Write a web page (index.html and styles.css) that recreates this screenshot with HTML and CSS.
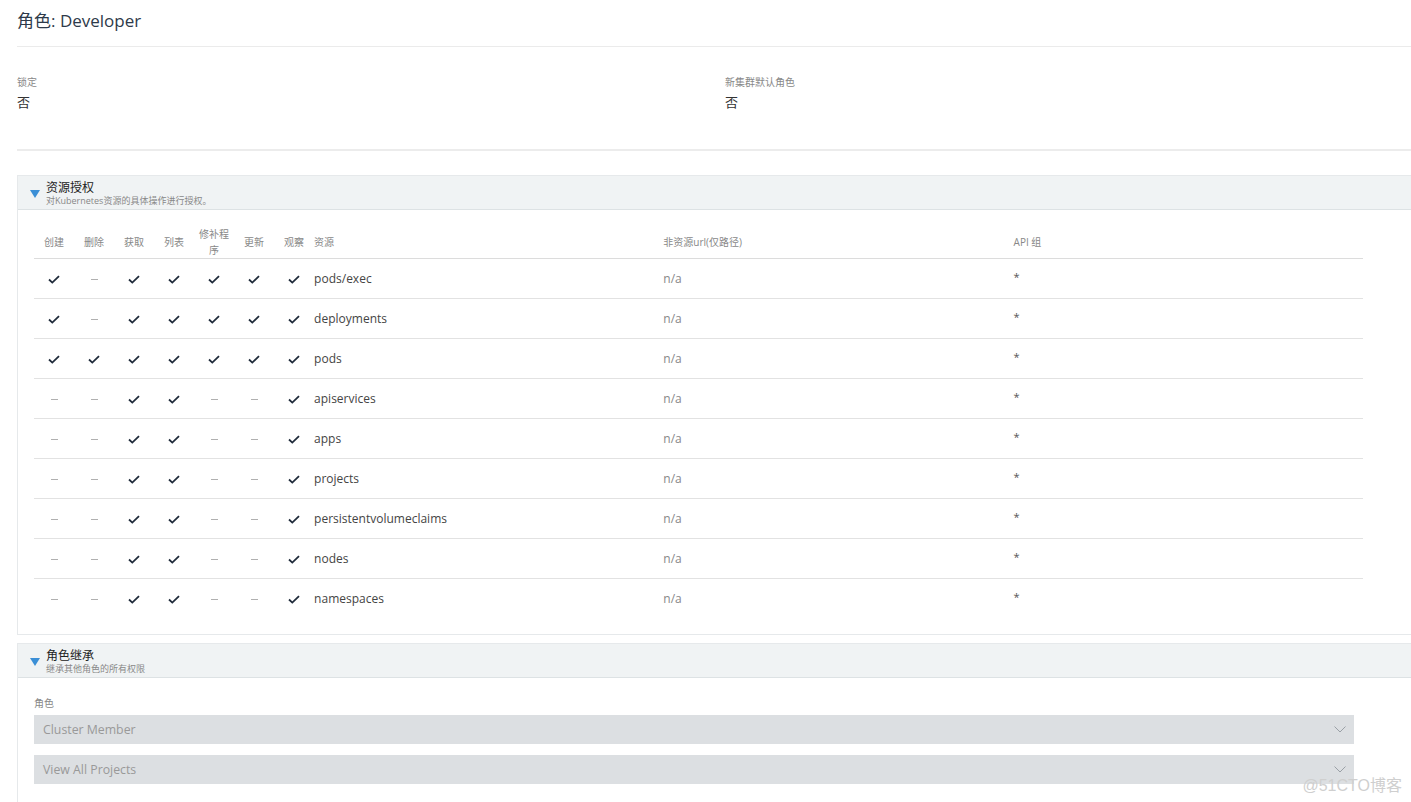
FILE: index.html
```html
<!DOCTYPE html>
<html lang="zh-CN">
<head>
<meta charset="utf-8">
<title>角色: Developer</title>
<link rel="stylesheet" href="styles.css">
</head>
<body>
<div class="page">
  <header class="title-bar">
    <h1 class="title">角色: Developer</h1>
  </header>

  <div class="details">
    <div class="detail">
      <div class="label">锁定</div>
      <div class="value">否</div>
    </div>
    <div class="detail">
      <div class="label">新集群默认角色</div>
      <div class="value">否</div>
    </div>
  </div>

  <section class="box">
    <div class="box-head">
      <span class="tri"></span>
      <div>
        <div class="box-title">资源授权</div>
        <div class="box-sub">对Kubernetes资源的具体操作进行授权。</div>
      </div>
    </div>
    <div class="box-body">
      <table class="grid">
        <colgroup>
          <col class="c-v"><col class="c-v"><col class="c-v"><col class="c-v"><col class="c-v"><col class="c-v"><col class="c-v">
          <col class="c-res"><col class="c-url"><col class="c-api">
        </colgroup>
        <thead>
          <tr>
            <th class="vc">创建</th><th class="vc">删除</th><th class="vc">获取</th><th class="vc">列表</th><th class="vc">修补程<br>序</th><th class="vc">更新</th><th class="vc">观察</th>
            <th>资源</th><th>非资源url(仅路径)</th><th>API 组</th>
          </tr>
        </thead>
        <tbody id="rows"></tbody>
      </table>
    </div>
  </section>

  <section class="box box2">
    <div class="box-head">
      <span class="tri"></span>
      <div>
        <div class="box-title">角色继承</div>
        <div class="box-sub">继承其他角色的所有权限</div>
      </div>
    </div>
    <div class="box-body inherit">
      <div class="label">角色</div>
      <div class="select"><span>Cluster Member</span><svg class="chev" width="12" height="7" viewBox="0 0 12 7"><polyline points="0.5,0.5 6,6 11.5,0.5" fill="none" stroke="#9aa0a6" stroke-width="1"/></svg></div>
      <div class="select"><span>View All Projects</span><svg class="chev" width="12" height="7" viewBox="0 0 12 7"><polyline points="0.5,0.5 6,6 11.5,0.5" fill="none" stroke="#9aa0a6" stroke-width="1"/></svg></div>
    </div>
  </section>
</div>
<div class="watermark">@51CTO博客</div>
<script src="app.js"></script>
</body>
</html>
```

FILE: app.js
```js
var data = [
  ["yny yyyy", "pods/exec"],
  ["yny yyyy", "deployments"],
  ["yyy yyyy", "pods"],
  ["nny ynny", "apiservices"],
  ["nny ynny", "apps"],
  ["nny ynny", "projects"],
  ["nny ynny", "persistentvolumeclaims"],
  ["nny ynny", "nodes"],
  ["nny ynny", "namespaces"]
];
var check = '<svg width="12" height="9" viewBox="0 0 12 9"><polyline points="1,4.5 4.3,7.6 11,1.2" fill="none" stroke="#1f2b3a" stroke-width="1.8"/></svg>';
var tb = document.getElementById('rows');
data.forEach(function (d) {
  var flags = d[0].replace(' ', '');
  var tr = document.createElement('tr');
  var html = '';
  for (var i = 0; i < 7; i++) {
    html += '<td class="vc">' + (flags[i] === 'y' ? check : '<span class="dash"></span>') + '</td>';
  }
  html += '<td class="res">' + d[1] + '</td><td class="na">n/a</td><td class="star"><span>*</span></td>';
  tr.innerHTML = html;
  tb.appendChild(tr);
});
```

FILE: styles.css
```css
html, body {
  margin: 0;
  padding: 0;
  overflow: hidden;
  background: #fff;
}
body {
  font-family: "Open Sans", "Noto Sans CJK SC", sans-serif;
  color: #333;
}
.page {
  width: 1440px;
  padding-left: 17px;
  box-sizing: border-box;
}
.title-bar {
  height: 46px;
  border-bottom: 1px solid #ebebeb;
  display: flex;
  align-items: center;
}
.title {
  margin: 0;
  font-weight: normal;
  font-size: 17px;
  color: #2e3a4a;
  line-height: 24px;
  margin-top: -4px;
}
.details {
  display: grid;
  grid-template-columns: 708px 1fr;
  padding-top: 28px;
  padding-bottom: 37px;
  border-bottom: 2px solid #ececec;
}
.label {
  font-size: 10px;
  line-height: 14px;
  color: #888;
}
.value {
  font-size: 13px;
  line-height: 20px;
  margin-top: 3px;
  color: #333;
}
.box {
  margin-top: 24px;
  border: 1px solid #e6e9eb;
  border-right: none;
}
.box2 {
  margin-top: 8px;
  border-bottom: none;
}
.box-head {
  background: #f0f3f4;
  border-bottom: 1px solid #dde2e4;
  display: flex;
  align-items: center;
  padding-left: 12px;
  padding-top: 1px;
  box-sizing: border-box;
  height: 34px;
}
.tri {
  width: 0;
  height: 0;
  border-left: 5px solid transparent;
  border-right: 5px solid transparent;
  border-top: 8px solid #3b8fd6;
  margin-right: 6px;
  margin-top: 2px;
}
.box-title {
  font-size: 12px;
  line-height: 14px;
  color: #222;
}
.box-sub {
  font-size: 9px;
  line-height: 11px;
  color: #888;
}
.box-body {
  padding: 16px 0 16px 16px;
}
.grid {
  border-collapse: collapse;
  width: 1329px;
  table-layout: fixed;
}
.c-v { width: 40px; }
.c-res { width: 349px; }
.c-url { width: 350px; }
.c-api { width: 349px; }
.grid th {
  height: 32px;
  font-weight: normal;
  font-size: 10px;
  line-height: 16px;
  color: #888;
  text-align: left;
  vertical-align: middle;
  padding: 0;
  border-bottom: 1px solid #dcdcdc;
}
.grid th.vc, .grid td.vc {
  text-align: center;
}
.grid td {
  height: 39px;
  padding: 0;
  font-size: 12px;
  line-height: 18px;
  color: #444;
  border-bottom: 1px solid #e2e2e2;
  vertical-align: middle;
}
.grid tbody tr:last-child td {
  border-bottom: none;
}
.grid td svg {
  display: inline-block;
  vertical-align: middle;
}
.dash {
  display: inline-block;
  width: 7px;
  height: 1px;
  background: #b0b0b0;
  vertical-align: middle;
}
.grid td.na {
  color: #888;
}
.grid td.star {
  font-size: 11px;
  line-height: 14px;
  color: #555;
}
.grid td.star span {
  display: inline-block;
  margin-bottom: 3px;
}
.inherit {
  padding-top: 18px;
  padding-bottom: 20px;
}
.select {
  width: 1320px;
  height: 29px;
  background: #dcdfe2;
  margin-top: 5px;
  display: flex;
  align-items: center;
  justify-content: space-between;
  padding: 0 8px 0 9px;
  box-sizing: border-box;
  font-size: 12.3px;
  color: #999;
}
.select + .select {
  margin-top: 11px;
}
.watermark {
  position: absolute;
  right: 9px;
  top: 772px;
  font-family: "Liberation Sans", "Noto Sans CJK SC", sans-serif;
  font-size: 16px;
  color: #cfcfcf;
}
```
